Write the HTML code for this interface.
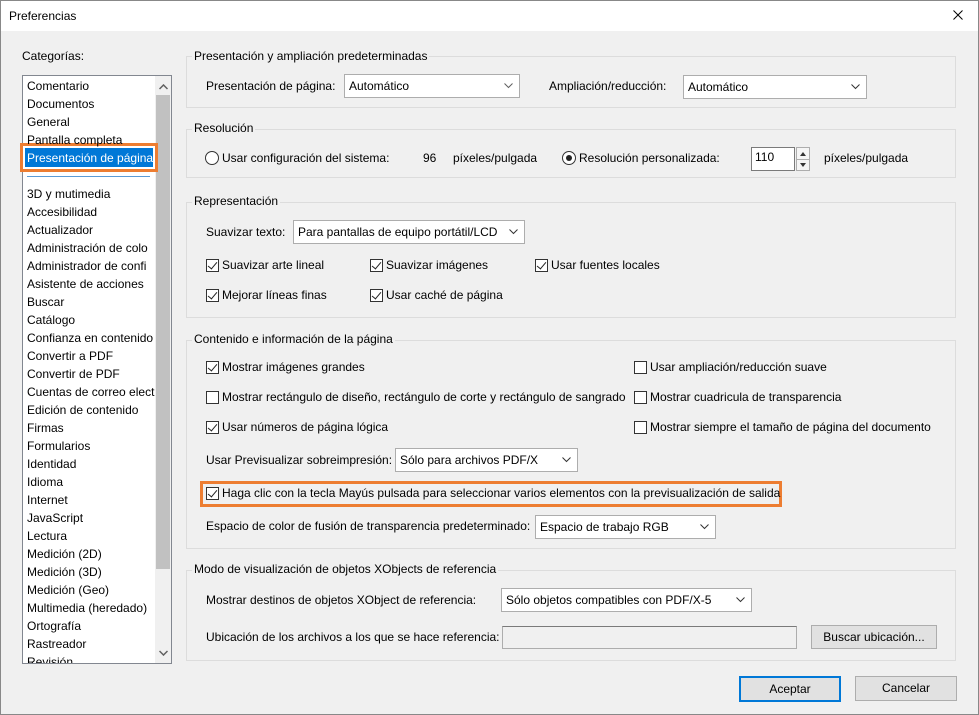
<!DOCTYPE html>
<html><head><meta charset="utf-8"><style>
*{box-sizing:border-box;margin:0;padding:0}
body{width:979px;height:715px;background:#f0f0f0;font-family:"Liberation Sans",sans-serif;font-size:12px;color:#000;position:relative;overflow:hidden}
.a{position:absolute}
.t{position:absolute;line-height:14px;white-space:nowrap}
.g{position:absolute;border:1px solid #dcdcdc}
.lg{position:absolute;background:#f0f0f0;padding:0 2px;line-height:14px;white-space:nowrap}
.cb{position:absolute;width:13px;height:13px;border:1px solid #333;background:#fff}
.cb.on::after{content:"";position:absolute;left:3px;top:0px;width:4px;height:8px;border:solid #222;border-width:0 1.5px 1.5px 0;transform:rotate(40deg)}
.rd{position:absolute;width:14px;height:14px;border:1px solid #333;border-radius:50%;background:#fff}
.rd.on::after{content:"";position:absolute;left:3px;top:3px;width:6px;height:6px;border-radius:50%;background:#222}
.cmb{position:absolute;border:1px solid #adadad;background:#fff;line-height:22px;padding-left:4px;white-space:nowrap}
.cmb svg{position:absolute;right:6px;top:8px}
.btn{position:absolute;border:1px solid #adadad;background:#e1e1e1;text-align:center;line-height:22px}
.li{position:absolute;left:27px;line-height:14px;white-space:nowrap}
</style></head><body>
<div class="a" style="left:0;top:0;width:979px;height:31px;background:#fff"></div>
<div class="a" style="left:0;top:0;width:979px;height:715px;border:1px solid #888"></div>
<div class="t" style="left:9px;top:9px">Preferencias</div>
<svg class="a" style="left:953px;top:10px" width="10" height="10"><path d="M0.5 0.5L9.5 9.5M9.5 0.5L0.5 9.5" stroke="#000" stroke-width="1"/></svg>

<div class="t" style="left:22px;top:49px">Categorías:</div>
<div class="a" style="left:22px;top:75px;width:150px;height:589px;background:#fff;border:1px solid #828790;overflow:hidden">
<div class="a" style="left:132px;top:0;width:16px;height:587px;background:#f0f0f0"></div>
<div class="a" style="left:133px;top:19px;width:14px;height:474px;background:#c1c1c1"></div>
<svg class="a" style="left:136px;top:8px" width="9" height="6"><path d="M0.5 5L4.5 1L8.5 5" stroke="#606060" fill="none" stroke-width="1.5"/></svg>
<svg class="a" style="left:136px;top:574px" width="9" height="6"><path d="M0.5 1L4.5 5L8.5 1" stroke="#606060" fill="none" stroke-width="1.5"/></svg>
</div>
<div class="a" style="left:25px;top:148px;width:128px;height:19px;background:#0078d7"></div>
<div class="a" style="left:20px;top:143px;width:138px;height:29px;border:3px solid #ed7d31"></div>
<div class="a" style="left:27px;top:176px;width:123px;height:1px;background:#5b9bd5"></div>
<div class="li" style="top:79px">Comentario</div>
<div class="li" style="top:97px">Documentos</div>
<div class="li" style="top:115px">General</div>
<div class="li" style="top:133px">Pantalla completa</div>
<div class="li" style="top:151px;color:#fff">Presentación de página</div>
<div class="a" style="left:22px;top:185px;width:133px;height:478px;overflow:hidden">
<div style="position:relative;left:5px;top:0px;line-height:18px;white-space:nowrap">3D y mutimedia<br>Accesibilidad<br>Actualizador<br>Administración de colo<br>Administrador de confi<br>Asistente de acciones<br>Buscar<br>Catálogo<br>Confianza en contenido<br>Convertir a PDF<br>Convertir de PDF<br>Cuentas de correo elect<br>Edición de contenido<br>Firmas<br>Formularios<br>Identidad<br>Idioma<br>Internet<br>JavaScript<br>Lectura<br>Medición (2D)<br>Medición (3D)<br>Medición (Geo)<br>Multimedia (heredado)<br>Ortografía<br>Rastreador<br>Revisión</div>
</div>

<!-- G1 -->
<div class="g" style="left:186px;top:56px;width:770px;height:52px"></div>
<div class="lg" style="left:192px;top:49px">Presentación y ampliación predeterminadas</div>
<div class="t" style="left:206px;top:79px">Presentación de página:</div>
<div class="cmb" style="left:344px;top:74px;width:176px;height:24px">Automático<svg width="9" height="6"><path d="M0.5 0.5L4.5 4.5L8.5 0.5" stroke="#606060" fill="none"/></svg></div>
<div class="t" style="left:549px;top:79px">Ampliación/reducción:</div>
<div class="cmb" style="left:683px;top:75px;width:184px;height:24px">Automático<svg width="9" height="6"><path d="M0.5 0.5L4.5 4.5L8.5 0.5" stroke="#333" fill="none"/></svg></div>

<!-- G2 -->
<div class="g" style="left:186px;top:129px;width:770px;height:49px"></div>
<div class="lg" style="left:192px;top:121px">Resolución</div>
<div class="rd" style="left:205px;top:151px"></div>
<div class="t" style="left:222px;top:151px">Usar configuración del sistema:</div>
<div class="t" style="left:423px;top:151px">96</div>
<div class="t" style="left:453px;top:151px">píxeles/pulgada</div>
<div class="rd on" style="left:562px;top:151px"></div>
<div class="t" style="left:579px;top:151px">Resolución personalizada:</div>
<div class="a" style="left:751px;top:147px;width:44px;height:24px;background:#fff;border:1px solid #7a7a7a;padding:2px 0 0 3px;line-height:14px">110</div>
<div class="a" style="left:796px;top:147px;width:14px;height:24px;border:1px solid #adadad;background:#f5f5f5"></div>
<div class="a" style="left:796px;top:159px;width:14px;height:1px;background:#adadad"></div>
<svg class="a" style="left:800px;top:152px" width="6" height="4"><path d="M0 4L3 0L6 4Z" fill="#333"/></svg>
<svg class="a" style="left:800px;top:163px" width="6" height="4"><path d="M0 0L3 4L6 0Z" fill="#333"/></svg>
<div class="t" style="left:824px;top:151px">píxeles/pulgada</div>

<!-- G3 -->
<div class="g" style="left:186px;top:202px;width:770px;height:116px"></div>
<div class="lg" style="left:192px;top:194px">Representación</div>
<div class="t" style="left:206px;top:225px">Suavizar texto:</div>
<div class="cmb" style="left:293px;top:220px;width:232px;height:24px">Para pantallas de equipo portátil/LCD<svg width="9" height="6"><path d="M0.5 0.5L4.5 4.5L8.5 0.5" stroke="#333" fill="none"/></svg></div>
<div class="cb on" style="left:206px;top:259px"></div><div class="t" style="left:222px;top:258px">Suavizar arte lineal</div>
<div class="cb on" style="left:370px;top:259px"></div><div class="t" style="left:386px;top:258px">Suavizar imágenes</div>
<div class="cb on" style="left:535px;top:259px"></div><div class="t" style="left:551px;top:258px">Usar fuentes locales</div>
<div class="cb on" style="left:206px;top:289px"></div><div class="t" style="left:222px;top:288px">Mejorar líneas finas</div>
<div class="cb on" style="left:370px;top:289px"></div><div class="t" style="left:386px;top:288px">Usar caché de página</div>

<!-- G4 -->
<div class="g" style="left:186px;top:340px;width:770px;height:209px"></div>
<div class="lg" style="left:192px;top:332px">Contenido e información de la página</div>
<div class="cb on" style="left:206px;top:361px"></div><div class="t" style="left:222px;top:360px">Mostrar imágenes grandes</div>
<div class="cb" style="left:634px;top:361px"></div><div class="t" style="left:650px;top:360px">Usar ampliación/reducción suave</div>
<div class="cb" style="left:206px;top:391px"></div><div class="t" style="left:222px;top:390px">Mostrar rectángulo de diseño, rectángulo de corte y rectángulo de sangrado</div>
<div class="cb" style="left:634px;top:391px"></div><div class="t" style="left:650px;top:390px">Mostrar cuadricula de transparencia</div>
<div class="cb on" style="left:206px;top:421px"></div><div class="t" style="left:222px;top:420px">Usar números de página lógica</div>
<div class="cb" style="left:634px;top:421px"></div><div class="t" style="left:650px;top:420px">Mostrar siempre el tamaño de página del documento</div>
<div class="t" style="left:206px;top:453px">Usar Previsualizar sobreimpresión:</div>
<div class="cmb" style="left:395px;top:448px;width:183px;height:24px">Sólo para archivos PDF/X<svg width="9" height="6"><path d="M0.5 0.5L4.5 4.5L8.5 0.5" stroke="#333" fill="none"/></svg></div>
<div class="a" style="left:200px;top:481px;width:582px;height:26px;border:3px solid #ed7d31"></div>
<div class="cb on" style="left:206px;top:487px"></div><div class="t" style="left:222px;top:486px">Haga clic con la tecla Mayús pulsada para seleccionar varios elementos con la previsualización de salida</div>
<div class="t" style="left:206px;top:519px">Espacio de color de fusión de transparencia predeterminado:</div>
<div class="cmb" style="left:535px;top:515px;width:181px;height:24px">Espacio de trabajo RGB<svg width="9" height="6"><path d="M0.5 0.5L4.5 4.5L8.5 0.5" stroke="#333" fill="none"/></svg></div>

<!-- G5 -->
<div class="g" style="left:186px;top:570px;width:770px;height:91px"></div>
<div class="lg" style="left:192px;top:562px">Modo de visualización de objetos XObjects de referencia</div>
<div class="t" style="left:206px;top:593px">Mostrar destinos de objetos XObject de referencia:</div>
<div class="cmb" style="left:501px;top:588px;width:251px;height:24px">Sólo objetos compatibles con PDF/X-5<svg width="9" height="6"><path d="M0.5 0.5L4.5 4.5L8.5 0.5" stroke="#333" fill="none"/></svg></div>
<div class="t" style="left:206px;top:630px">Ubicación de los archivos a los que se hace referencia:</div>
<div class="a" style="left:502px;top:626px;width:295px;height:23px;border:1px solid #adadad;border-top-color:#7a7a7a;background:#f0f0f0"></div>
<div class="btn" style="left:811px;top:625px;width:126px;height:24px">Buscar ubicación...</div>

<div class="btn" style="left:739px;top:676px;width:102px;height:26px;border:2px solid #0078d7;line-height:22px">Aceptar</div>
<div class="btn" style="left:855px;top:676px;width:102px;height:25px">Cancelar</div>
</body></html>
